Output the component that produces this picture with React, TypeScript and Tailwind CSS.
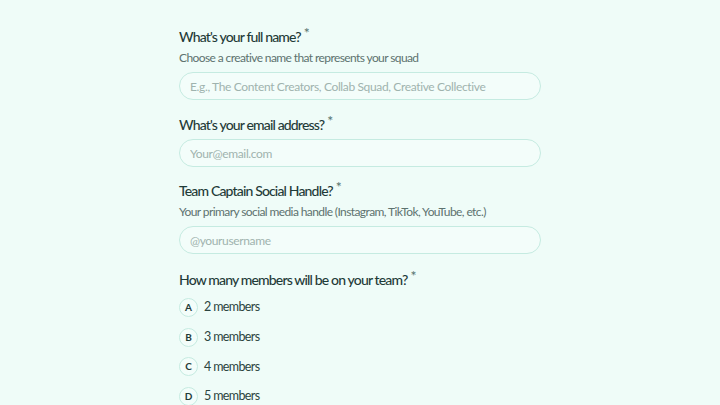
const font = { fontFamily: "Lato, 'Noto Sans', sans-serif" };

function Title({ children }: { children: React.ReactNode }) {
  return (
    <div className="h-5 text-[14px] leading-5 tracking-[-0.06em] text-[#1f3b38] font-medium">
      {children}
      <span className="relative -top-[4px] ml-[3px] text-[14px] text-[#55736e]">*</span>
    </div>
  );
}

function Hint({ children }: { children: React.ReactNode }) {
  return (
    <div className="mt-[3px] h-4 text-[12px] leading-4 tracking-[-0.05em] text-[#5d726f]">
      {children}
    </div>
  );
}

function Field({ placeholder }: { placeholder: string }) {
  return (
    <input
      placeholder={placeholder}
      className="block w-full h-[28px] rounded-full border border-[#c5ebe1] bg-[#f3fdfa] px-[10px] text-[12px] tracking-[-0.03em] text-[#1f3b38] placeholder:text-[#9fb3ae] outline-none"
      style={font}
    />
  );
}

const options = [
  { key: "A", label: "2 members" },
  { key: "B", label: "3 members" },
  { key: "C", label: "4 members" },
  { key: "D", label: "5 members" },
];

export default function App() {
  return (
    <div className="min-h-[405px] bg-[#effcf8]" style={font}>
      <div className="mx-auto w-[362px] pt-[27px]">
        <Title>What's your full name?</Title>
        <Hint>Choose a creative name that represents your squad</Hint>
        <div className="mt-[6px]">
          <Field placeholder="E.g., The Content Creators, Collab Squad, Creative Collective" />
        </div>

        <div className="mt-[15px]">
          <Title>What's your email address?</Title>
        </div>
        <div className="mt-[4px]">
          <Field placeholder="Your@email.com" />
        </div>

        <div className="mt-[14px]">
          <Title>Team Captain Social Handle?</Title>
        </div>
        <Hint>Your primary social media handle (Instagram, TikTok, YouTube, etc.)</Hint>
        <div className="mt-[6px]">
          <Field placeholder="@yourusername" />
        </div>

        <div className="mt-[16px]">
          <Title>How many members will be on your team?</Title>
        </div>
        <div className="mt-[8px] flex flex-col gap-[10.7px]">
          {options.map((o) => (
            <div key={o.key} className="flex items-center gap-[6px]">
              <span className="flex h-[19px] w-[19px] items-center justify-center rounded-full border border-[#c5ebe1] bg-[#f3fdfa] text-[10px] font-bold text-[#1f3b38]">
                {o.key}
              </span>
              <span className="text-[12.5px] tracking-[-0.05em] text-[#2b4440]">{o.label}</span>
            </div>
          ))}
        </div>
      </div>
    </div>
  );
}
